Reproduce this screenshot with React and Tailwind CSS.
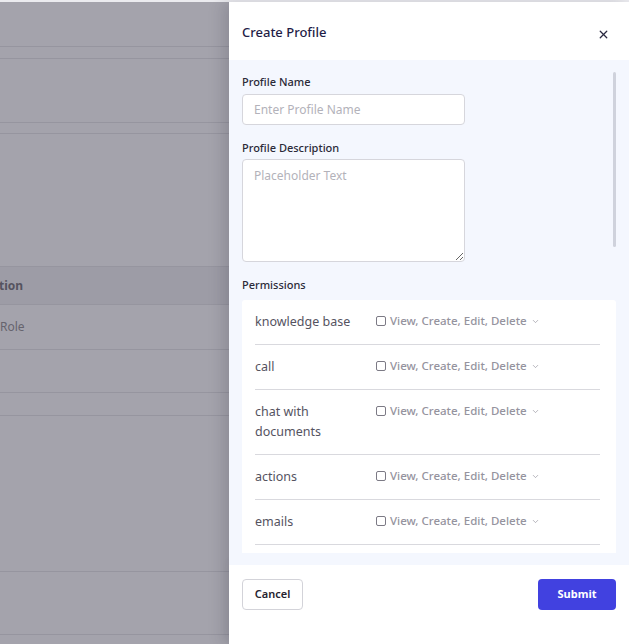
import { X, ChevronDown } from 'lucide-react'

const permissions = ['knowledge base', 'call', 'chat with documents', 'actions', 'emails']

function BackdropLine() {
  return <div className="h-px shrink-0 bg-[#96959f]" />
}

export default function App() {
  return (
    <div
      className="flex h-[644px] w-[629px] flex-col overflow-hidden bg-white"
      style={{ fontFamily: '"Noto Sans", "Open Sans", sans-serif' }}
    >
      <div className="h-[2px] shrink-0 bg-[#ebebef]" />
      <div className="flex min-h-0 flex-1">
        {/* dimmed page behind the drawer */}
        <div className="flex w-[229px] shrink-0 flex-col bg-[#a4a3ac] text-[12px]">
          <div className="h-[44px] shrink-0" />
          <BackdropLine />
          <div className="h-[11px] shrink-0" />
          <BackdropLine />
          <div className="h-[63px] shrink-0" />
          <BackdropLine />
          <div className="h-[10px] shrink-0" />
          <BackdropLine />
          <div className="h-[132px] shrink-0" />
          <BackdropLine />
          <div className="flex h-[37px] shrink-0 items-center bg-[#9d9ca6] font-bold text-[#55535f]">
            <span className="-ml-px">tion</span>
          </div>
          <BackdropLine />
          <div className="flex h-[44px] shrink-0 items-center text-[#66646e]">
            <span>Role</span>
          </div>
          <BackdropLine />
          <div className="h-[42px] shrink-0" />
          <BackdropLine />
          <div className="h-[22px] shrink-0" />
          <BackdropLine />
          <div className="h-[155px] shrink-0" />
          <BackdropLine />
          <div className="h-[62px] shrink-0" />
          <BackdropLine />
        </div>

        {/* drawer */}
        <div className="relative flex w-[400px] shrink-0 flex-col bg-white shadow-[-6px_0_14px_rgba(40,38,55,0.18)]">
          <div className="flex h-[58px] shrink-0 items-center justify-between pl-[13px] pr-[19px] pt-[3px]">
            <h2 className="text-[13px] font-medium text-[#1f1d47]">Create Profile</h2>
            <X className="mt-[3px] h-[13px] w-[13px] text-[#2a2840]" strokeWidth={2.4} />
          </div>

          <div className="relative flex min-h-0 flex-1 flex-col bg-[#f4f7fe] pb-[12px]">
            <div className="min-h-0 flex-1 overflow-hidden pl-[13px] pr-[13px] pt-[14px]">
              <label className="block text-[11px] font-medium leading-[16px] text-[#2b2a38]">
                Profile Name
              </label>
              <input
                className="mt-[4px] block h-[31px] w-[223px] rounded-[4px] border border-[#d6d6dc] bg-white px-[11px] text-[12px] text-[#333] outline-none placeholder:text-[#b3b2ba]"
                placeholder="Enter Profile Name"
              />

              <label className="mt-[15px] block text-[11px] font-medium leading-[16px] text-[#2b2a38]">
                Profile Description
              </label>
              <textarea
                className="mt-[3px] block h-[103px] w-[223px] resize-y rounded-[4px] border border-[#d6d6dc] bg-white px-[11px] py-[7px] text-[12px] leading-[18px] text-[#333] outline-none placeholder:text-[#b3b2ba]"
                placeholder="Placeholder Text"
              />

              <div className="mt-[15px] text-[11px] font-medium leading-[16px] text-[#2b2a38]">
                Permissions
              </div>

              <div className="mt-[7px] rounded-[3px] bg-white pb-[20px] pl-[13px] pr-[16px]">
                {permissions.map((name) => (
                  <div
                    key={name}
                    className="flex items-start border-b border-[#d9d9de] py-[12px]"
                  >
                    <div className="w-[121px] shrink-0 pr-[14px] text-[12.5px] leading-[20px] text-[#55535f]">
                      {name}
                    </div>
                    <div className="flex items-center gap-[4px] text-[11.5px] leading-[18px] text-[#95939e]">
                      <span className="h-[10px] w-[10px] rounded-[2px] border border-[#7c7a85] bg-white" />
                      <span className="font-medium">View, Create, Edit, Delete</span>
                      <ChevronDown className="h-[9px] w-[9px] text-[#95939e]" strokeWidth={1.8} />
                    </div>
                  </div>
                ))}
              </div>
            </div>

            <div className="absolute right-[13px] top-[12px] h-[175px] w-[3px] rounded-full bg-[#cfd2dc]" />
          </div>

          <div className="flex h-[79px] shrink-0 items-start justify-between bg-white pl-[13px] pr-[13px] pt-[14px] shadow-[0_-4px_8px_rgba(60,60,90,0.06)]">
            <button className="h-[31px] w-[61px] rounded-[4px] border border-[#d3d3d9] bg-white text-[11px] font-semibold text-[#25232f]">
              Cancel
            </button>
            <button className="h-[31px] w-[78px] rounded-[4px] bg-[#4141e0] text-[11px] font-bold text-white">
              Submit
            </button>
          </div>
        </div>
      </div>
    </div>
  )
}
